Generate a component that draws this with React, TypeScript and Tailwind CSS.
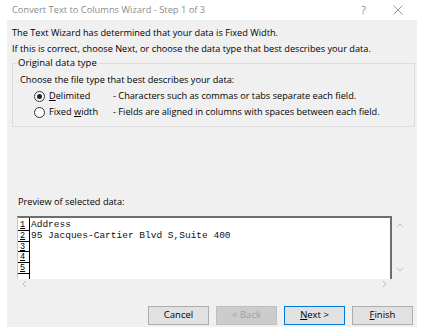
const ui = '"Segoe UI", "Open Sans", "Liberation Sans", sans-serif';

function Radio({ checked }: { checked: boolean }) {
  return (
    <span className="w-[11px] h-[11px] rounded-full border border-[#333] bg-white flex items-center justify-center">
      {checked && <span className="w-[5px] h-[5px] rounded-full bg-[#222]" />}
    </span>
  );
}

function Chevron({ dir }: { dir: 'up' | 'down' | 'left' | 'right' }) {
  const d = {
    up: 'M1 5 L4 2 L7 5',
    down: 'M1 2 L4 5 L7 2',
    left: 'M5 1 L2 4 L5 7',
    right: 'M2 1 L5 4 L2 7',
  }[dir];
  const vert = dir === 'up' || dir === 'down';
  return (
    <svg width={vert ? 8 : 7} height={vert ? 7 : 8} viewBox={vert ? '0 0 8 7' : '0 0 7 8'} fill="none" stroke="#bdbdbd" strokeWidth="1">
      <path d={d} />
    </svg>
  );
}

function Btn({ children, kind }: { children: React.ReactNode; kind?: 'disabled' | 'default' }) {
  const cls =
    kind === 'disabled'
      ? 'bg-[#cccccc] border-[#bfbfbf] text-[#a0a0a0]'
      : kind === 'default'
        ? 'bg-[#e1e1e1] border-[#0078d7] text-black'
        : 'bg-[#e1e1e1] border-[#adadad] text-black';
  return (
    <div className={`w-[61px] h-[19px] border flex items-center justify-center text-[9.5px] ${cls}`}>
      {children}
    </div>
  );
}

export default function App() {
  const rows = ['Address', '95 Jacques-Cartier Blvd S,Suite 400', '', '', ''];
  return (
    <div className="w-[423px] h-[332px] bg-white overflow-hidden" style={{ fontFamily: ui }}>
      {/* title bar */}
      <div className="h-[20px] flex items-center pl-[12px] pr-[20px] text-[9.3px] text-[#8c8c8c]">
        <span className="flex-1">Convert Text to Columns Wizard - Step 1 of 3</span>
        <span className="mr-[27px] text-[11px]">?</span>
        <svg width="10" height="10" viewBox="0 0 10 10" stroke="#8c8c8c" strokeWidth="0.9">
          <path d="M0.5 0.5 L9.5 9.5 M9.5 0.5 L0.5 9.5" />
        </svg>
      </div>

      <div className="ml-[7px] w-[410px] h-[307px] bg-[#f0f0f0] flex flex-col text-[9.2px] text-black">
        <div className="pl-[5px] pt-[5px] leading-[16px]">
          <div>The Text Wizard has determined that your data is Fixed Width.</div>
          <div>If this is correct, choose Next, or choose the data type that best describes your data.</div>
        </div>

        {/* group box */}
        <div className="relative mt-[6px] ml-[5px] w-[403px] h-[64px] border border-[#dcdcdc] pl-[7px] pt-[8px]">
          <span className="absolute -top-[8px] left-[4px] bg-[#f0f0f0] px-[1px] text-[9.5px]">Original data type</span>
          <div className="leading-[16px]">Choose the file type that best describes your data:</div>
          <div className="flex items-center h-[16px] ml-[14px]">
            <Radio checked />
            <span className="ml-[4px] w-[64px]"><u>D</u>elimited</span>
            <span>- Characters such as commas or tabs separate each field.</span>
          </div>
          <div className="flex items-center h-[16px] ml-[14px]">
            <Radio checked={false} />
            <span className="ml-[4px] w-[64px]">Fixed <u>w</u>idth</span>
            <span>- Fields are aligned in columns with spaces between each field.</span>
          </div>
        </div>

        <div className="mt-[69px] ml-[11px] leading-[12px]">Preview of selected data:</div>

        {/* preview */}
        <div className="mt-[8px] ml-[10px] flex">
          <div className="w-[375px] h-[63px] bg-white border-t-2 border-r-2 border-[#6e6e6e] border-l border-l-[#c8c8c8] overflow-hidden flex">
            <div className="w-[12px] h-full border-r border-black pt-[2px]" style={{ fontFamily: '"Liberation Mono", monospace' }}>
              {rows.map((_, i) => (
                <div key={i} className="h-[10.8px] border-b border-black text-[8.5px] leading-[10px] pl-[2px] underline">
                  {i + 1}
                </div>
              ))}
            </div>
            <div className="pt-[2px]" style={{ fontFamily: '"Liberation Mono", monospace' }}>
              {rows.map((r, i) => (
                <div key={i} className="h-[10.8px] pl-[1px] text-[9.5px] leading-[10.8px] text-[#111] whitespace-pre">
                  {r}
                </div>
              ))}
            </div>
          </div>
          <div className="w-[14px] flex flex-col justify-between items-center pt-[6px] pb-[6px] ml-[1px]">
            <Chevron dir="up" />
            <Chevron dir="down" />
          </div>
        </div>
        <div className="ml-[14px] w-[367px] flex justify-between items-center h-[12px] -mt-[1px]">
          <Chevron dir="left" />
          <Chevron dir="right" />
        </div>

        <div className="mt-[16px] flex justify-end gap-[7px] pr-[4px]">
          <Btn>Cancel</Btn>
          <Btn kind="disabled">&lt; Back</Btn>
          <Btn kind="default"><span><u>N</u>ext &gt;</span></Btn>
          <Btn><span><u>F</u>inish</span></Btn>
        </div>
      </div>
    </div>
  );
}
